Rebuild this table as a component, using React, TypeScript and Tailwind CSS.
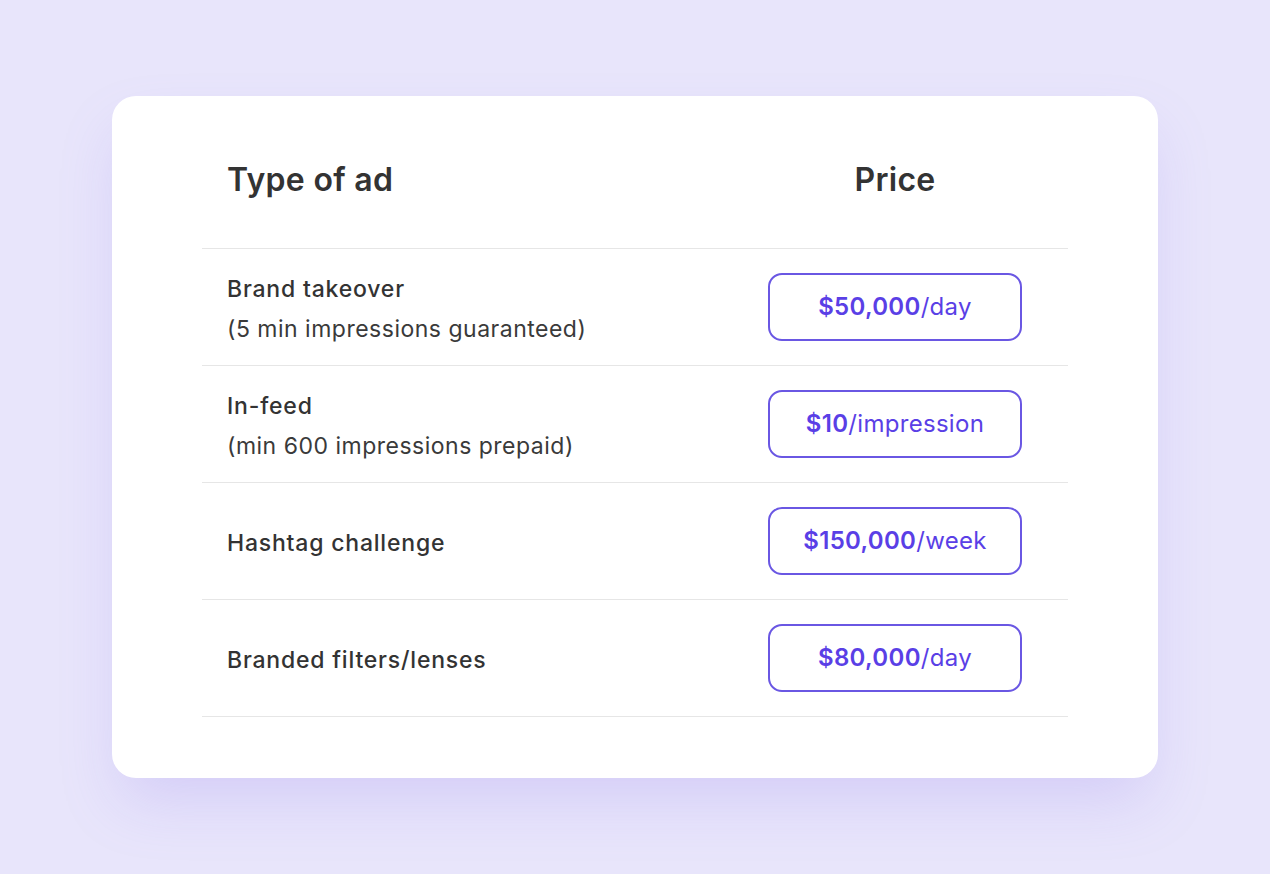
const rows = [
  { title: "Brand takeover", note: "(5 min impressions guaranteed)", price: "$50,000", unit: "/day" },
  { title: "In-feed", note: "(min 600 impressions prepaid)", price: "$10", unit: "/impression" },
  { title: "Hashtag challenge", price: "$150,000", unit: "/week" },
  { title: "Branded filters/lenses", price: "$80,000", unit: "/day" },
]

export default function App() {
  return (
    <div
      className="flex h-[874px] w-full items-start justify-center bg-[#e8e5fb] pt-[96px] text-[#333333]"
      style={{ fontFamily: "Inter, 'Noto Sans', sans-serif" }}
    >
      <div className="w-[1046px] rounded-[24px] bg-white px-[90px] pb-[61px] shadow-[0_30px_60px_-10px_rgba(150,130,240,0.25)]">
        <div className="flex h-[153px] items-center justify-between border-b border-[#e6e6e6] pl-[25px] pr-[46px] pt-[15px]">
          <h3 className="text-[32px] font-semibold tracking-[0.3px]">Type of ad</h3>
          <h3 className="w-[254px] text-center text-[32px] font-semibold tracking-[0.3px]">Price</h3>
        </div>

        {rows.map(row => (
          <div
            key={row.title}
            className="flex h-[117px] items-center justify-between border-b border-[#e6e6e6] pl-[25px] pr-[46px]"
          >
            <div className="flex flex-col gap-[12px] pt-[3px] text-[23px] leading-[28px]">
              <p className="font-medium tracking-[0.8px]">{row.title}</p>
              {row.note && <p className="font-normal tracking-[0.5px] text-[#3a3a3a]">{row.note}</p>}
            </div>

            <div className="flex h-[68px] w-[254px] items-center justify-center rounded-[14px] border-2 border-[#6a57e3] text-[24px] tracking-[0.3px] text-[#5a3fe6]">
              <span className="font-semibold">{row.price}</span>
              <span className="font-normal">{row.unit}</span>
            </div>
          </div>
        ))}
      </div>
    </div>
  )
}
